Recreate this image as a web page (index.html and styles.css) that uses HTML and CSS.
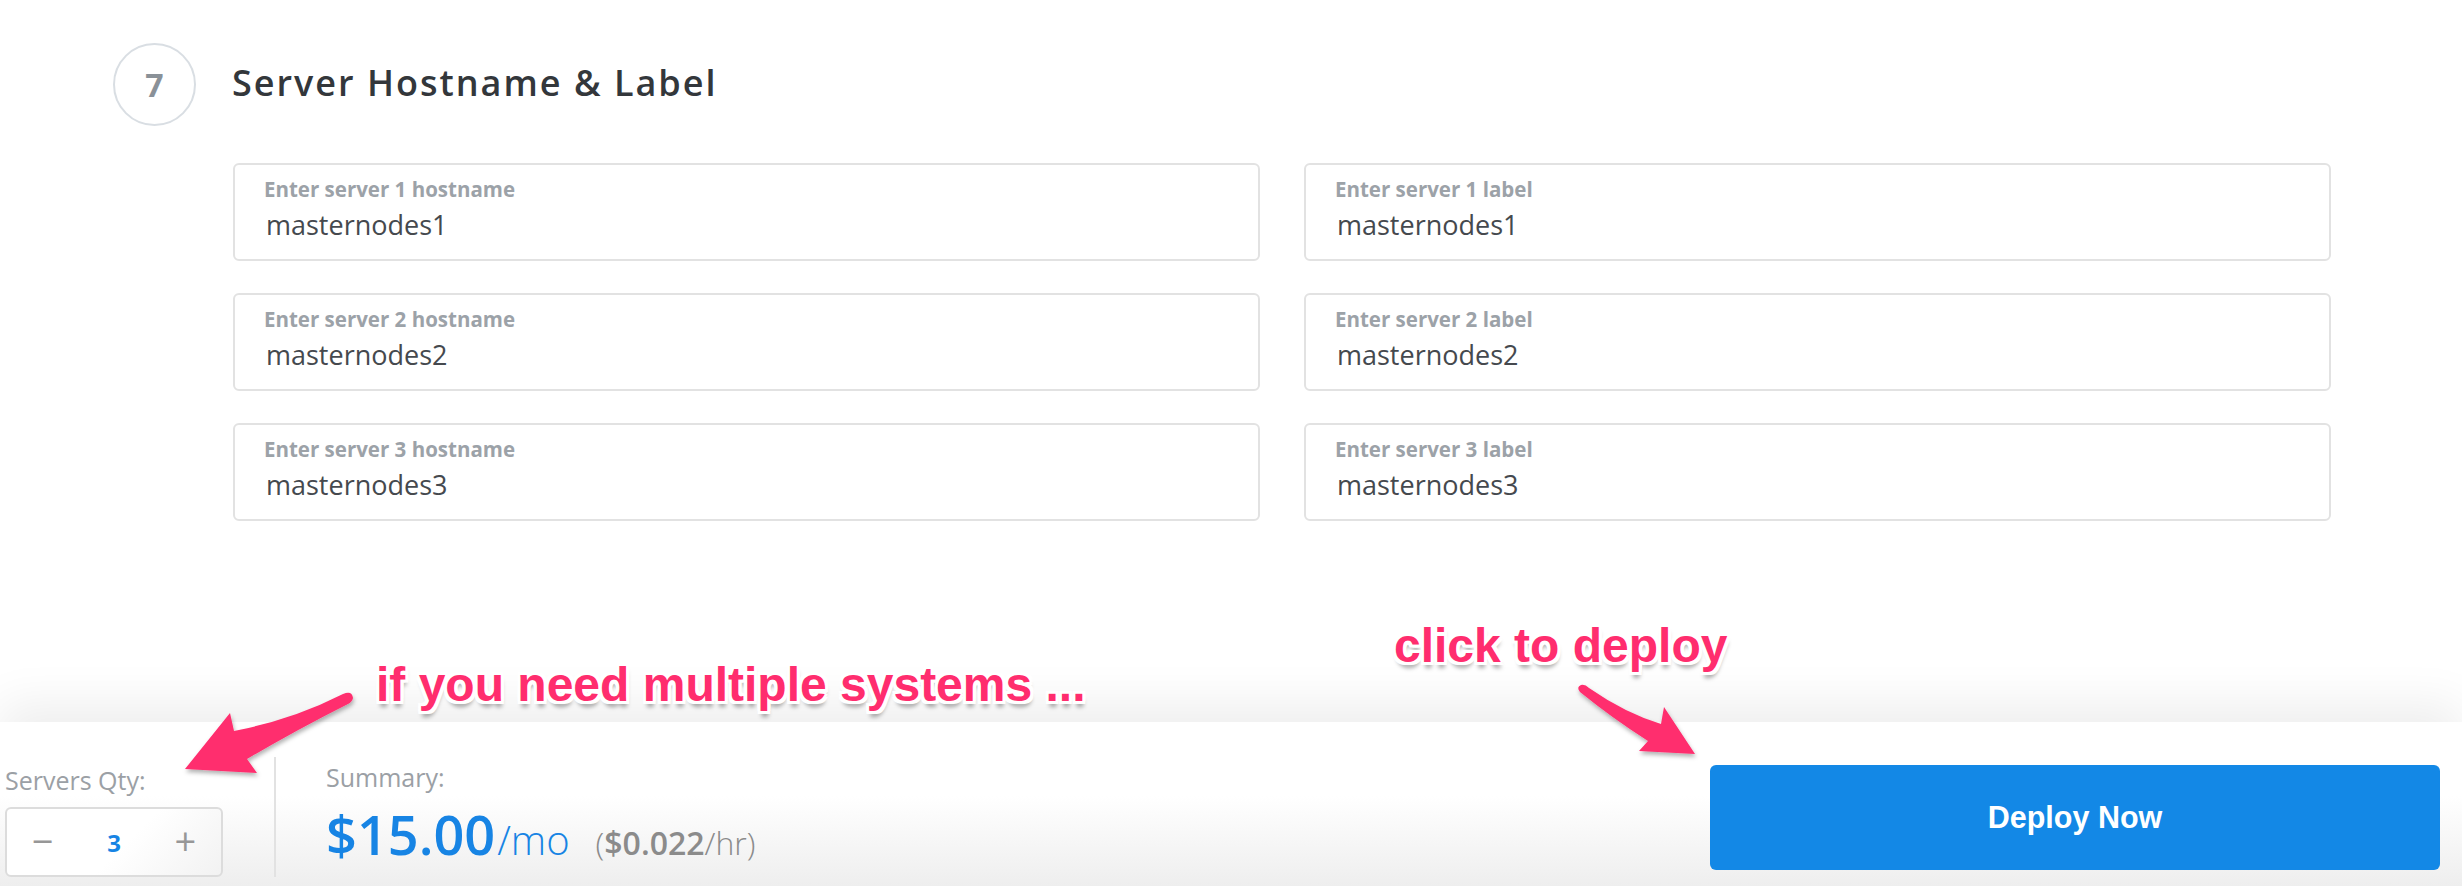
FILE: index.html
```html
<!DOCTYPE html>
<html lang="en">
<head>
<meta charset="utf-8">
<title>Server Hostname &amp; Label</title>
<link rel="stylesheet" href="styles.css">
</head>
<body>
<div class="page">
  <main class="section">
    <div class="step-head">
      <div class="step-num">7</div>
      <h2 class="step-title">Server Hostname &amp; Label</h2>
    </div>
    <div class="fields">
      <div class="field"><span class="field-label">Enter server 1 hostname</span><span class="field-value">masternodes1</span></div>
      <div class="field"><span class="field-label">Enter server 1 label</span><span class="field-value">masternodes1</span></div>
      <div class="field"><span class="field-label">Enter server 2 hostname</span><span class="field-value">masternodes2</span></div>
      <div class="field"><span class="field-label">Enter server 2 label</span><span class="field-value">masternodes2</span></div>
      <div class="field"><span class="field-label">Enter server 3 hostname</span><span class="field-value">masternodes3</span></div>
      <div class="field"><span class="field-label">Enter server 3 label</span><span class="field-value">masternodes3</span></div>
    </div>
  </main>
  <footer class="deploy-bar">
    <div class="qty">
      <div class="bar-label">Servers Qty:</div>
      <div class="qty-box">
        <span class="qty-btn">&minus;</span>
        <span class="qty-val">3</span>
        <span class="qty-btn">+</span>
      </div>
    </div>
    <div class="divider"></div>
    <div class="summary">
      <div class="bar-label">Summary:</div>
      <div class="price"><span class="price-main">$15.00</span><span class="price-unit">/mo</span><span class="price-hr"><span class="light">(</span><b>$0.022</b><span class="light">/hr)</span></span></div>
    </div>
    <button class="deploy-btn">Deploy Now</button>
  </footer>

  <svg class="arrows" width="2462" height="886" viewBox="0 0 2462 886">
    <defs>
      <filter id="sh" x="-20%" y="-20%" width="140%" height="140%">
        <feDropShadow dx="1" dy="3" stdDeviation="2" flood-color="#000" flood-opacity="0.3"/>
      </filter>
    </defs>
    <path filter="url(#sh)" fill="#ff2d6e" d="M185 769 L230 713 L234 731 Q292 720 343 694 Q352 690 353 698 Q352 702 348 704 Q300 728 247 759 L257 773 Z"/>
    <path filter="url(#sh)" fill="#ff2d6e" d="M1695 754 L1639 751 L1648 741 Q1612 718 1580 692 Q1576 687 1581 685 Q1585 684 1589 688 Q1625 713 1661 724 L1664 707 Z"/>
  </svg>
  <div class="annot annot-multi">if you need multiple systems ...</div>
  <div class="annot annot-deploy">click to deploy</div>
</div>
</body>
</html>
```
FILE: styles.css
```css
* { box-sizing: border-box; }
html, body { margin: 0; padding: 0; background: #fff; }
body { font-family: "Open Sans", "Noto Sans", sans-serif; color: #35393d; }

.page {
  position: relative;
  width: 2462px;
  height: 886px;
  display: flex;
  flex-direction: column;
  overflow: hidden;
}

.section {
  flex: 1;
  padding: 43px 0 0 113px;
}

.step-head {
  display: flex;
  align-items: center;
  gap: 36px;
}

.step-num {
  width: 83px;
  height: 83px;
  border: 2px solid #d9dee3;
  border-radius: 50%;
  display: flex;
  align-items: center;
  justify-content: center;
  font-size: 32px;
  font-weight: 700;
  color: #8a9198;
}

.step-title {
  margin: 0 0 4px;
  font-size: 36px;
  font-weight: 600;
  letter-spacing: 2px;
  color: #33373b;
}

.fields {
  margin: 37px 0 0 120px;
  width: 2098px;
  display: grid;
  grid-template-columns: 1fr 1fr;
  column-gap: 44px;
  row-gap: 32px;
}

.field {
  height: 98px;
  border: 2px solid #e2e2e2;
  border-radius: 6px;
  padding: 12px 0 0 29px;
  display: flex;
  flex-direction: column;
  gap: 8px;
}

.field-label {
  font-size: 20.5px;
  line-height: 24px;
  font-weight: 700;
  color: #9ca2a8;
}

.field-value {
  font-size: 27px;
  line-height: 32px;
  color: #45494e;
  padding-left: 2px;
}

.deploy-bar {
  height: 164px;
  display: flex;
  align-items: flex-end;
  padding: 0 22px 9px 5px;
  background: linear-gradient(#ffffff 45%, #eeeeee 100%);
  box-shadow: 0 -18px 45px rgba(0, 0, 0, 0.07);
  position: relative;
}

.bar-label {
  font-size: 25px;
  line-height: 30px;
  color: #9ba0a5;
}

.qty .bar-label { margin-bottom: 12px; }

.qty-box {
  width: 218px;
  height: 70px;
  border: 2px solid #dcdcdc;
  border-radius: 6px;
  display: grid;
  grid-template-columns: 1fr 1fr 1fr;
  align-items: center;
  justify-items: center;
  background: linear-gradient(135deg, #fff 55%, #f2f2f2);
}

.qty-btn {
  font-size: 38px;
  font-weight: 400;
  color: #979797;
  line-height: 1;
  margin-top: -4px;
}

.qty-val {
  font-size: 24px;
  font-weight: 700;
  color: #1784e4;
}

.divider {
  width: 2px;
  height: 120px;
  background: #e2e2e2;
  margin-left: 51px;
}

.summary {
  margin-left: 50px;
  margin-bottom: 13px;
}

.summary .bar-label { margin-bottom: 12px; }

.price {
  display: flex;
  align-items: baseline;
  line-height: 60px;
  height: 60px;
}

.price-main {
  font-size: 54px;
  font-weight: 600;
  color: #1784e4;
}

.price-unit {
  font-size: 40px;
  font-weight: 300;
  color: #1784e4;
  margin-left: 2px;
}

.price-hr {
  font-size: 32px;
  color: #8b8b8b;
  margin-left: 26px;
}

.price-hr b { font-weight: 600; }
.price-hr .light { font-weight: 300; }

.deploy-btn {
  margin-left: auto;
  margin-bottom: 7px;
  width: 730px;
  height: 105px;
  border: 0;
  border-radius: 6px;
  background: #1388e6;
  color: #fff;
  font-family: "Liberation Sans", Arial, sans-serif;
  font-weight: 700;
  font-size: 30.5px;
  cursor: pointer;
}

.arrows {
  position: absolute;
  left: 0;
  top: 0;
  pointer-events: none;
}

.annot {
  position: absolute;
  font-family: "Liberation Sans", Arial, sans-serif;
  font-weight: 700;
  line-height: 48px;
  color: #ff2d6e;
  white-space: nowrap;
  text-shadow:
    -3px -3px 0 #fff, 0 -3px 0 #fff, 3px -3px 0 #fff, 3px 0 0 #fff,
    3px 3px 0 #fff, 0 3px 0 #fff, -3px 3px 0 #fff, -3px 0 0 #fff,
    1px 6px 4px rgba(0, 0, 0, 0.35);
}

.annot-multi {
  left: 376px;
  top: 661px;
  font-size: 48px;
}

.annot-deploy {
  left: 1394px;
  top: 622px;
  font-size: 48px;
}
```
